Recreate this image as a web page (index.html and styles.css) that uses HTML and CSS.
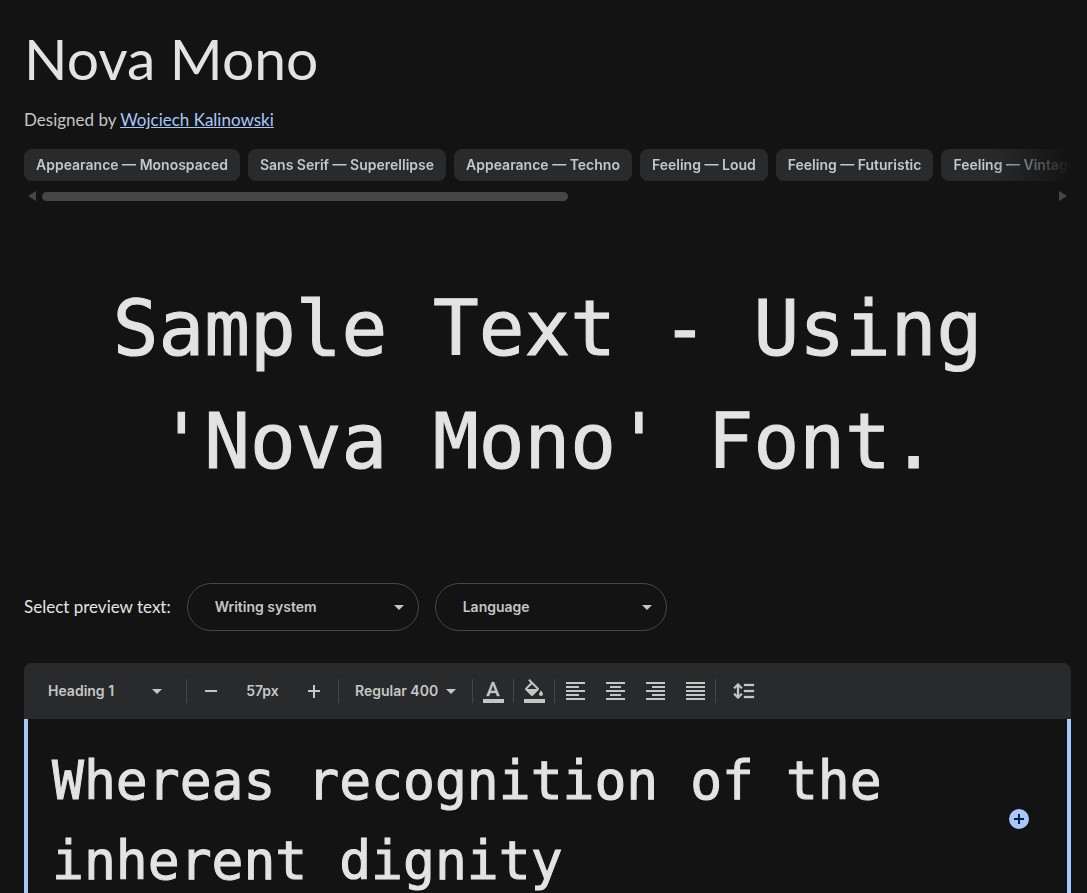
FILE: index.html
```
<!DOCTYPE html>
<html lang="en">
    <head>
        <meta charset="UTF-8" />
        <meta name="viewport" content="width=device-width, initial-scale=1" />
        <title>Nova Mono</title>
        <link rel="stylesheet" href="styles.css">
    </head>

    <body>
        <header class="specimen-header">
            <h1>Nova Mono</h1>
            <p class="designer">Designed by <a href="#">Wojciech Kalinowski</a></p>
            <ul class="chips">
                <li>Appearance — Monospaced</li>
                <li>Sans Serif — Superellipse</li>
                <li>Appearance — Techno</li>
                <li>Feeling — Loud</li>
                <li>Feeling — Futuristic</li>
                <li>Feeling — Vintage</li>
            </ul>
            <div class="scrollbar">
                <svg width="8" height="10" viewBox="0 0 8 10"><path d="M8 0v10L0 5z" /></svg>
                <div class="track"><div class="thumb"></div></div>
                <svg width="8" height="10" viewBox="0 0 8 10"><path d="M0 0v10l8-5z" /></svg>
            </div>
        </header>

        <main>
            <p class="sample">Sample Text - Using 'Nova Mono' Font.</p>

            <div class="preview-options">
                <span class="preview-label">Select preview text:</span>
                <div class="dropdown pill">
                    <select aria-label="Writing system"><option>Writing system</option></select>
                    <svg width="10" height="5" viewBox="0 0 10 5"><path d="M0 0h10L5 5z" /></svg>
                </div>
                <div class="dropdown pill">
                    <select aria-label="Language"><option>Language</option></select>
                    <svg width="10" height="5" viewBox="0 0 10 5"><path d="M0 0h10L5 5z" /></svg>
                </div>
            </div>

            <section class="tester">
                <div class="toolbar">
                    <div class="dropdown style-select">
                        <select aria-label="Text style"><option>Heading 1</option></select>
                        <svg width="10" height="5" viewBox="0 0 10 5"><path d="M0 0h10L5 5z" /></svg>
                    </div>
                    <i class="sep"></i>
                    <button class="step" aria-label="Decrease size">
                        <svg width="24" height="24" viewBox="0 0 24 24"><path d="M6 11h12v2H6z" /></svg>
                    </button>
                    <input class="size" type="text" value="57px" aria-label="Font size">
                    <button class="step" aria-label="Increase size">
                        <svg width="24" height="24" viewBox="0 0 24 24"><path d="M6 11h5V6h2v5h5v2h-5v6h-2v-6H6z" /></svg>
                    </button>
                    <i class="sep"></i>
                    <div class="dropdown weight-select">
                        <select aria-label="Font weight"><option>Regular 400</option></select>
                        <svg width="10" height="5" viewBox="0 0 10 5"><path d="M0 0h10L5 5z" /></svg>
                    </div>
                    <i class="sep"></i>
                    <button class="tool" aria-label="Text color">
                        <svg width="24" height="24" viewBox="0 0 24 24"><path d="M2 20h21v4H2z" /><path d="M11 3 5.500 17h2.500l1.100-3.100h5.800L16 17h2.500L13 3zM9.800 11.900 12 5.700l2.200 6.200z" stroke="currentColor" stroke-width=".4" /></svg>
                    </button>
                    <i class="sep"></i>
                    <button class="tool" aria-label="Background color">
                        <svg width="24" height="24" viewBox="0 0 24 24"><path d="M2 20h21v4H2z" /><path d="M16.560 8.940 7.620 0 6.210 1.410l2.380 2.380-5.150 5.150a1.490 1.490 0 0 0 0 2.120l5.500 5.500c.290.290.680.440 1.060.440s.770-.150 1.060-.440l5.500-5.500c.590-.580.590-1.530 0-2.120zM5.210 10 10 5.210 14.790 10zM19 11.500s-2 2.170-2 3.500c0 1.100.9 2 2 2s2-.9 2-2c0-1.330-2-3.500-2-3.500z" /></svg>
                    </button>
                    <i class="sep"></i>
                    <button class="tool" aria-label="Align left">
                        <svg width="24" height="24" viewBox="0 0 24 24"><path d="M3 3h19v2H3zM3 7h13v2H3zM3 11h19v2H3zM3 15h13v2H3zM3 19h19v2H3z" /></svg>
                    </button>
                    <button class="tool" aria-label="Align center">
                        <svg width="24" height="24" viewBox="0 0 24 24"><path d="M3 3h19v2H3zM7 7h11v2H7zM3 11h19v2H3zM7 15h11v2H7zM3 19h19v2H3z" /></svg>
                    </button>
                    <button class="tool" aria-label="Align right">
                        <svg width="24" height="24" viewBox="0 0 24 24"><path d="M3 3h19v2H3zM9 7h13v2H9zM3 11h19v2H3zM9 15h13v2H9zM3 19h19v2H3z" /></svg>
                    </button>
                    <button class="tool" aria-label="Justify">
                        <svg width="24" height="24" viewBox="0 0 24 24"><path d="M3 3h19v2H3zM3 7h19v2H3zM3 11h19v2H3zM3 15h19v2H3zM3 19h19v2H3z" /></svg>
                    </button>
                    <i class="sep"></i>
                    <button class="tool spacing" aria-label="Line spacing">
                        <svg width="24" height="24" viewBox="0 0 24 24"><path d="M6 4 1.500 8.500l1.400 1.400L5 7.800v8.400l-2.100-2.100-1.400 1.400L6 20l4.500-4.500-1.400-1.400L7 16.200V7.800l2.100 2.100 1.400-1.400zM12 5h10v2H12zM12 11h10v2H12zM12 17h10v2H12z" stroke="currentColor" stroke-width=".3" /></svg>
                    </button>
                </div>
                <div class="editor">
                    <p class="editor-text" contenteditable="true" spellcheck="false">Whereas recognition of the inherent dignity</p>
                    <button class="add" aria-label="Add block">
                        <svg width="20" height="20" viewBox="0 0 20 20"><path d="M5 9h4V5h2v4h4v2h-4v4H9v-4H5z" /></svg>
                    </button>
                </div>
            </section>
        </main>
    </body>
</html>
```
FILE: styles.css
```
* {
    box-sizing: border-box;
    margin: 0;
    padding: 0;
}

html,
body {
    height: 100%;
}

body {
    overflow: hidden;
    padding: 26px 16px 0 24px;
    background: #131313;
    color: #e3e3e3;
    font-family: "Google Sans", Lato, sans-serif;
    font-size: 17px;
    line-height: 24px;
}

svg {
    display: block;
    flex: none;
    fill: currentColor;
}

button,
input,
select {
    border: 0;
    outline: 0;
    background: transparent;
    color: inherit;
    font: inherit;
}

h1 {
    font-size: 57px;
    font-weight: 400;
    line-height: 64px;
}

.designer {
    margin-top: 18px;
    color: #c4c7c5;
}

.designer a {
    color: #a8c7fa;
}

/* tag chips, faded out on the right */
.chips {
    display: flex;
    gap: 8px;
    margin-top: 17px;
    overflow: hidden;
    list-style: none;
    -webkit-mask-image: linear-gradient(to right, #000 calc(100% - 80px), transparent);
    mask-image: linear-gradient(to right, #000 calc(100% - 80px), transparent);
}

.chips li {
    flex: none;
    padding: 0 12px;
    border-radius: 8px;
    background: #282a2c;
    color: #c4c7c5;
    line-height: 32px;
}

.chips li,
.dropdown,
.size {
    font-family: "Google Sans", Inter, sans-serif;
    font-size: 14px;
    font-weight: 600;
}

.scrollbar {
    display: flex;
    align-items: center;
    gap: 6px;
    margin-top: 10px;
    padding: 0 4px;
    color: #444746;
}

.track {
    flex: 1;
}

.thumb {
    width: 52%;
    height: 9px;
    border-radius: 5px;
    background: #444746;
}

.sample {
    margin-top: 71px;
    padding: 0 72px;
    font-family: "Nova Mono", "DejaVu Sans Mono", monospace;
    font-size: 76px;
    line-height: 113px;
    text-align: center;
    -webkit-text-stroke: 1px;
}

.preview-options {
    display: flex;
    align-items: center;
    gap: 16px;
    margin-top: 85px;
}

.dropdown {
    display: grid;
    align-items: center;
    color: #c4c7c5;
}

.dropdown select,
.dropdown svg {
    grid-area: 1 / 1;
}

.dropdown select {
    height: 100%;
    appearance: none;
}

.dropdown svg {
    justify-self: end;
    pointer-events: none;
}

.pill {
    width: 232px;
    height: 48px;
    border: 1px solid #444746;
    border-radius: 24px;
}

.pill select {
    padding-left: 27px;
}

.pill svg {
    margin-right: 14px;
}

.tester {
    margin-top: 32px;
}

.toolbar {
    display: flex;
    align-items: center;
    height: 56px;
    padding-left: 24px;
    border-radius: 8px 8px 0 0;
    background: #282a2c;
    color: #c4c7c5;
}

.sep {
    width: 1px;
    height: 24px;
    background: #444746;
}

.style-select {
    width: 114px;
    height: 40px;
    margin-right: 24px;
}

.weight-select {
    width: 101px;
    height: 40px;
    margin: 0 16px;
}

.step,
.tool {
    display: flex;
    align-items: center;
    justify-content: center;
    height: 40px;
}

.step {
    width: 48px;
}

.tool {
    width: 40px;
}

.spacing {
    width: 56px;
}

.size {
    width: 55px;
    text-align: center;
}

.editor {
    position: relative;
    min-height: 200px;
    padding: 22px 96px 24px 24px;
    border: solid #a8c7fa;
    border-width: 0 4px;
}

.editor-text {
    outline: 0;
    font-family: "Nova Mono", "DejaVu Sans Mono", monospace;
    font-size: 53px;
    line-height: 80px;
    -webkit-text-stroke: 1px;
}

.add {
    position: absolute;
    top: 90px;
    right: 38px;
    border-radius: 50%;
    background: #a8c7fa;
    color: #041e49;
}
```
